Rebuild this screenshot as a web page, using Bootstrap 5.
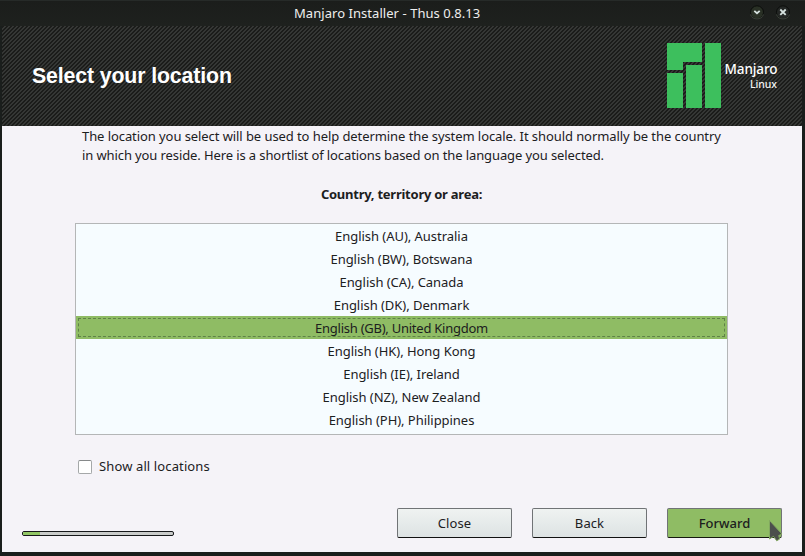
<!DOCTYPE html>
<html lang="en">
<head>
<meta charset="utf-8">
<title>Manjaro Installer - Thus 0.8.13</title>
<meta name="viewport" content="width=device-width, initial-scale=1">
<link href="https://cdn.jsdelivr.net/npm/bootstrap@5.3.0/dist/css/bootstrap.min.css" rel="stylesheet">
<style>
body { width: 805px; height: 556px; background: #1a1e1c; font: 13px/19px "Noto Sans", "Open Sans", sans-serif; color: #1c201e; }
.window { width: 805px; height: 556px; padding: 0 3px 4px 2px; }
.titlebar { height: 26px; padding-top: 1px; color: #eee; border-top: 1px solid #262a28; background: linear-gradient(#1b1d1b, #1e211e); margin: 0 -3px 0 -2px; }
.titlebar .caption { width: 186px; margin-left: 294px; letter-spacing: .05px; line-height: 22px; }
.win-buttons { margin-left: 268px; gap: 10px; }
.hero { height: 100px; padding: 0 20px 0 30px; }
.hero { background: linear-gradient(135deg, #1b1c1a 31%, #353735 31% 56%, #1b1c1a 56% 81%, #353735 81%) 0 0 / 4px 4px; }
.hero h1 { font: bold 21.3px/26px "Liberation Sans", Arial, sans-serif; color: #fff; letter-spacing: -.13px; }
.brand { color: #f4f4f4; }
.pane { background: #f5f3f8; height: 426px; }
.intro { padding: 1px 0 0 80px; }
.intro-a { letter-spacing: -.077px; }
.intro-b { letter-spacing: -.105px; }
.subhead { font-weight: 700; margin-top: 20px; text-align: center; letter-spacing: -.25px; position: relative; left: -.5px; }
.places { width: 653px; height: 212px; margin: 19px 0 0 73px; border: 1px solid #b4b6b7; background: #f6fcff; border-radius: 0; }
.places .list-group-item { height: 23px; padding: 2px 2px; line-height: 20px; border: 0; background: transparent; color: #1c201e; text-align: center; letter-spacing: -.04px; }
.places .list-group-item.active { background: #8fbc64; margin: 0; letter-spacing: -.25px; }
.places .active span { display: block; height: 19px; line-height: 18px; border: 1px dashed #5f8248; }
.places .list-group-item:not(.active) span { display: block; }
.show-all { margin: 22px 0 0 76px; gap: 7px; letter-spacing: .12px; }
.show-all .form-check-input { width: 14px; height: 14px; margin: 0; border: 1px solid #a5a8a9; border-top-color: #86898a; border-radius: 2px; background: #fff; }
.actions { margin: 32px 20px 0 20px; height: 30px; }
.actions .progress { width: 152px; height: 5px; margin-top: 23px; border: 1px solid #15171a; border-radius: 2px; background: #c9cbca; }
.actions .progress-bar { background: #92c765; }
.button-row { gap: 20px; }
.actions .btn { width: 115px; height: 30px; padding: 0; font-size: 13px; line-height: 28px; color: #1c201e; border: 1px solid #707376; border-bottom-color: #111; border-radius: 2px; background: linear-gradient(#eff2f1, #e5eaea 55%, #dde2e3); letter-spacing: .1px; }
.actions .btn-go { background: #8fbc64; font-weight: 500; border-color: #707376 #707376 #15190f; letter-spacing: 0; }
.cursor { position: absolute; left: 767px; top: 518px; }
</style>
</head>
<body class="overflow-hidden">
<div class="window">
  <header class="titlebar d-flex">
    <div class="caption text-nowrap">Manjaro Installer - Thus 0.8.13</div>
    <div class="win-buttons d-flex">
      <svg width="16" height="20" viewBox="0 0 16 20"><circle cx="9" cy="10.300" r="6.500" fill="#293025" stroke="#0b0d0b"/><path d="M2.500 12.500a7 7 0 0 0 13 0" fill="none" stroke="#4a5247" stroke-width=".8"/><path d="M6.300 8.800l2.700 2.400 2.700-2.400" fill="none" stroke="#d5e1de" stroke-width="1.800"/></svg>
      <svg width="16" height="20" viewBox="0 0 16 20"><circle cx="9" cy="10.300" r="6.500" fill="#242725" stroke="#0b0d0b"/><path d="M2.500 12.500a7 7 0 0 0 13 0" fill="none" stroke="#4a5247" stroke-width=".8"/><path d="M6.300 7.500l5.400 5.400m0-5.400l-5.400 5.400" stroke="#d5e1de" stroke-width="1.800"/></svg>
    </div>
  </header>
  <section class="hero d-flex align-items-center justify-content-between">
    <h1 class="m-0">Select your location</h1>
    <svg class="brand" width="115" height="66" viewBox="0 0 115 66">
      <path fill="#3dbf5d" d="M0 0h35v19H16v8H0zM0 30h16v35H0zM19 22h16v43H19zM38 0h16v65H38z"/>
      <text x="57.500" y="31" textLength="53" font-size="13.500" font-weight="500" fill="#fff">Manjaro</text>
      <text x="83" y="45" textLength="27" font-size="10.500" font-weight="500" fill="#f3f3f3">Linux</text>
    </svg>
  </section>
  <main class="pane">
    <div class="intro text-nowrap">
      <div class="intro-a">The location you select will be used to help determine the system locale. It should normally be the country</div>
      <div class="intro-b">in which you reside. Here is a shortlist of locations based on the language you selected.</div>
    </div>
    <div class="subhead">Country, territory or area:</div>
    <ul class="places list-group">
      <li class="list-group-item"><span>English (AU), Australia</span></li>
      <li class="list-group-item"><span>English (BW), Botswana</span></li>
      <li class="list-group-item"><span>English (CA), Canada</span></li>
      <li class="list-group-item"><span>English (DK), Denmark</span></li>
      <li class="list-group-item active"><span>English (GB), United Kingdom</span></li>
      <li class="list-group-item"><span>English (HK), Hong Kong</span></li>
      <li class="list-group-item"><span>English (IE), Ireland</span></li>
      <li class="list-group-item"><span>English (NZ), New Zealand</span></li>
      <li class="list-group-item"><span>English (PH), Philippines</span></li>
    </ul>
    <div class="show-all d-flex align-items-center">
      <input class="form-check-input" type="checkbox" id="showAll">
      <label for="showAll">Show all locations</label>
    </div>
    <footer class="actions d-flex justify-content-between">
      <div class="progress"><div class="progress-bar" style="width: 11%"></div></div>
      <div class="button-row d-flex">
        <button class="btn" type="button">Close</button>
        <button class="btn" type="button">Back</button>
        <button class="btn btn-go" type="button">Forward</button>
      </div>
    </footer>
  </main>
</div>
<svg class="cursor" width="18" height="26" viewBox="0 0 18 26"><path d="M2.500 2.500v18.500l4-2.600 3.200 4.400 3-1.800-1-3.500 3.300-1.500z" fill="#4c4f4d" stroke="#82a860" stroke-width="1"/></svg>
</body>
</html>
